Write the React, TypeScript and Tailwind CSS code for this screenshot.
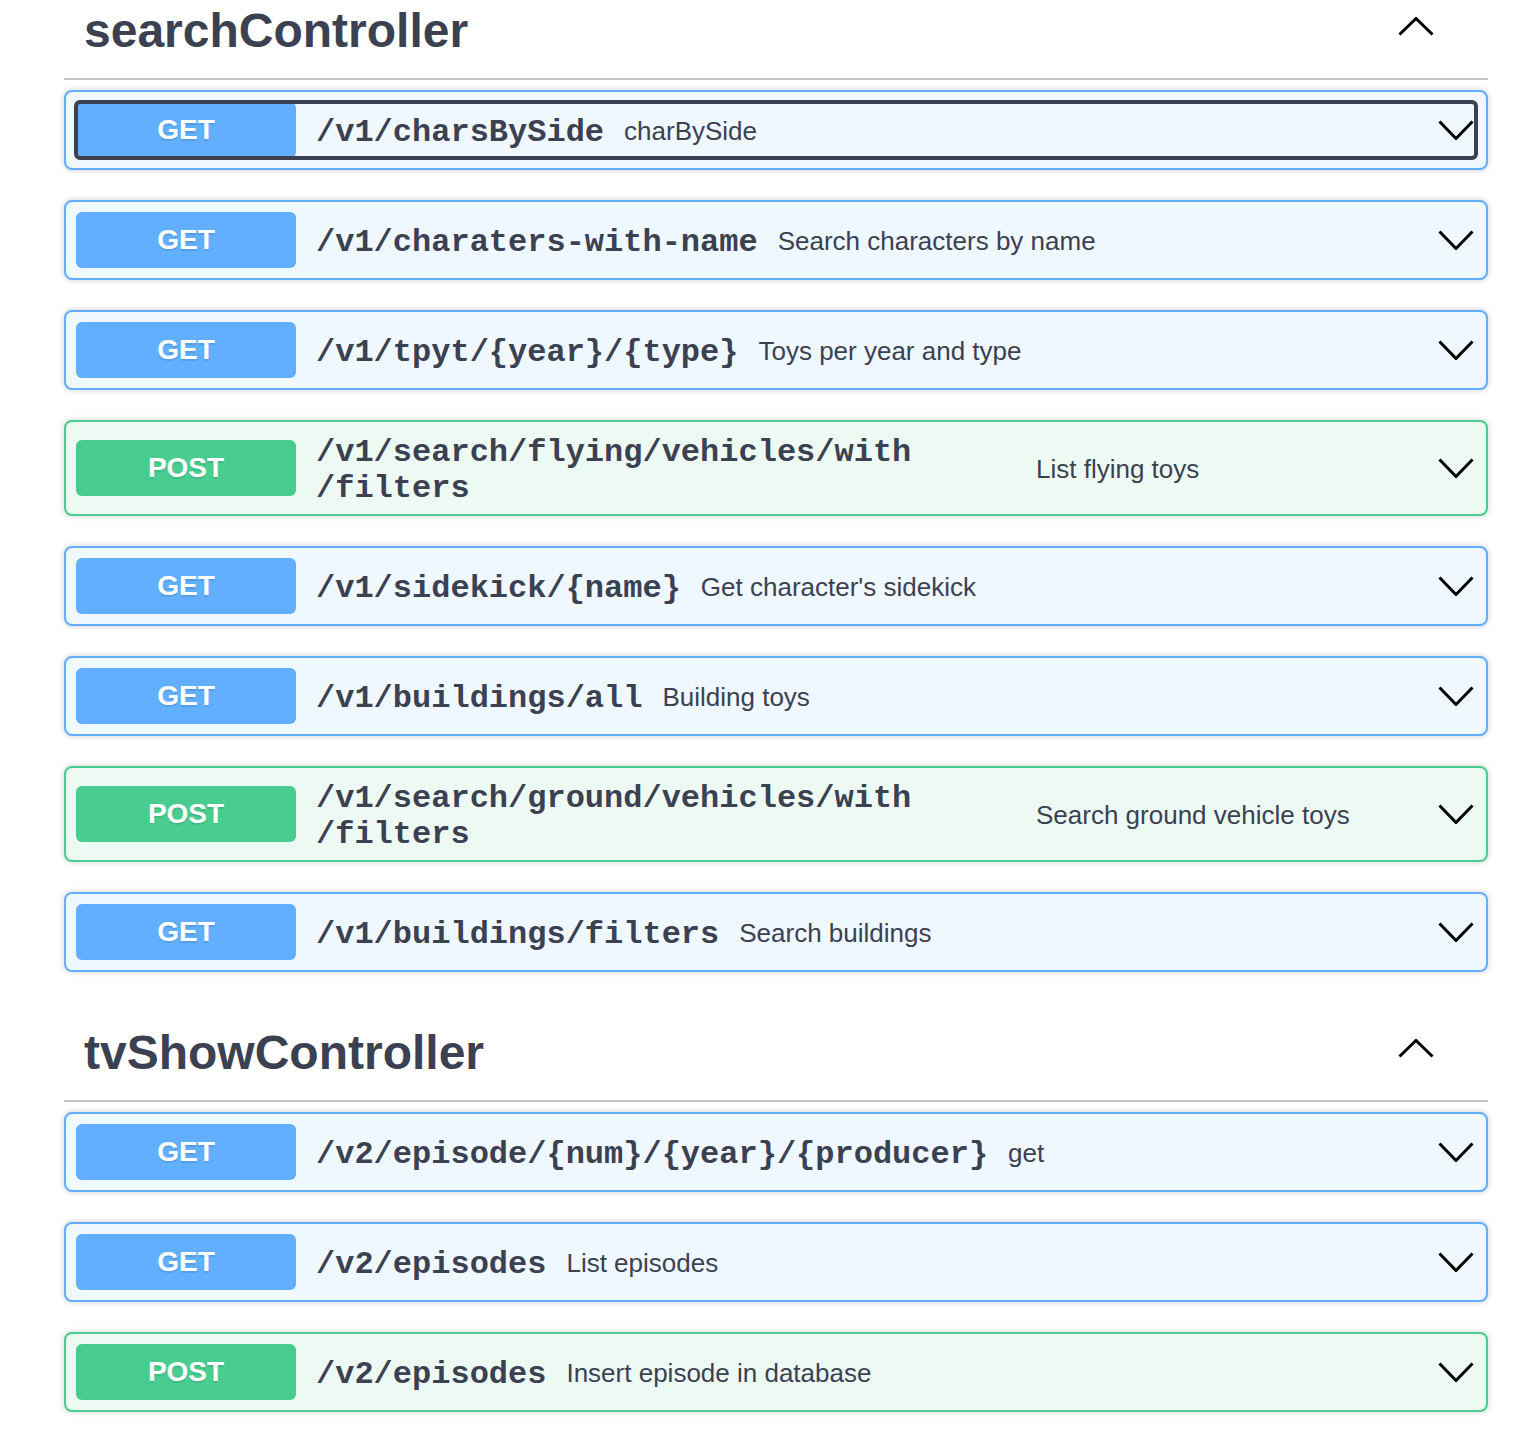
import React from "react";

type Method = "GET" | "POST";

interface Op {
  method: Method;
  path: string;
  summary: string;
  focused?: boolean;
}

interface Tag {
  name: string;
  ops: Op[];
}

const tags: Tag[] = [
  {
    name: "searchController",
    ops: [
      { method: "GET", path: "/v1/charsBySide", summary: "charBySide", focused: true },
      { method: "GET", path: "/v1/charaters-with-name", summary: "Search characters by name" },
      { method: "GET", path: "/v1/tpyt/{year}/{type}", summary: "Toys per year and type" },
      { method: "POST", path: "/v1/search/flying/vehicles/with/filters", summary: "List flying toys" },
      { method: "GET", path: "/v1/sidekick/{name}", summary: "Get character's sidekick" },
      { method: "GET", path: "/v1/buildings/all", summary: "Building toys" },
      { method: "POST", path: "/v1/search/ground/vehicles/with/filters", summary: "Search ground vehicle toys" },
      { method: "GET", path: "/v1/buildings/filters", summary: "Search buildings" },
    ],
  },
  {
    name: "tvShowController",
    ops: [
      { method: "GET", path: "/v2/episode/{num}/{year}/{producer}", summary: "get" },
      { method: "GET", path: "/v2/episodes", summary: "List episodes" },
      { method: "POST", path: "/v2/episodes", summary: "Insert episode in database" },
    ],
  },
];

const blockStyle: Record<Method, string> = {
  GET: "border-[#61affe] bg-[#eff7ff]",
  POST: "border-[#49cc90] bg-[#edfaf4]",
};

const badgeStyle: Record<Method, string> = {
  GET: "bg-[#61affe]",
  POST: "bg-[#49cc90]",
};

const ChevronDown = () => (
  <svg width="36" height="20" viewBox="0 0 36 20" className="shrink-0 mr-[2px]">
    <polyline points="1.5,1.5 18,18.5 34.5,1.5" fill="none" stroke="#000" strokeWidth="3" />
  </svg>
);

const ChevronUp = () => (
  <svg width="36" height="19" viewBox="0 0 36 19" className="shrink-0 mb-[9px]">
    <polyline points="1.5,17.5 18,1.5 34.5,17.5" fill="none" stroke="#000" strokeWidth="3" />
  </svg>
);

// break opportunities before every slash, like swagger does
const PathText = ({ path }: { path: string }) => {
  const parts = path.split("/").slice(1);
  return (
    <>
      {parts.map((p, i) => (
        <React.Fragment key={i}>
          <wbr />/{p}
        </React.Fragment>
      ))}
    </>
  );
};

const OpBlock = ({ op }: { op: Op }) => (
  <div
    className={`mb-[30px] rounded-[8px] border-2 p-[10px] shadow-[0_0_6px_rgba(0,0,0,0.19)] ${blockStyle[op.method]}`}
  >
    <div
      className={`flex items-center rounded-[4px] ${
        op.focused ? "outline-4 outline-[#3b4151] outline-offset-[-2px]" : ""
      }`}
    >
      <div
        className={`flex h-[56px] w-[220px] shrink-0 items-center justify-center rounded-[6px] text-[28px] font-bold text-white [text-shadow:0_2px_0_rgba(0,0,0,0.1)] ${badgeStyle[op.method]}`}
      >
        {op.method}
      </div>
      <div className="max-w-[740px] translate-y-[3px] px-5 font-['Liberation_Mono',monospace] text-[32px] leading-[36px] font-bold text-[#3b4151]">
        <PathText path={op.path} />
      </div>
      <div className="flex-1 translate-y-[1px] text-[26px] text-[#3b4151]">{op.summary}</div>
      <ChevronDown />
    </div>
  </div>
);

const TagSection = ({ tag, first }: { tag: Tag; first?: boolean }) => (
  <div className={first ? "-mt-[20px]" : ""}>
    <h3 className="mb-[10px] flex items-center border-b-2 border-[#c4c6cb] pt-[23px] pb-[19px] pl-5 pr-[54px] text-[48px] leading-[56px] font-bold text-[#3b4151]">
      <span className="flex-1">{tag.name}</span>
      <ChevronUp />
    </h3>
    {tag.ops.map((op, i) => (
      <OpBlock key={i} op={op} />
    ))}
  </div>
);

export default function App() {
  return (
    <div className="min-h-[1440px] overflow-hidden bg-white font-['Liberation_Sans',Arial,sans-serif]">
      <div className="ml-[64px] w-[1424px]">
        {tags.map((t, i) => (
          <TagSection key={t.name} tag={t} first={i === 0} />
        ))}
      </div>
    </div>
  );
}
